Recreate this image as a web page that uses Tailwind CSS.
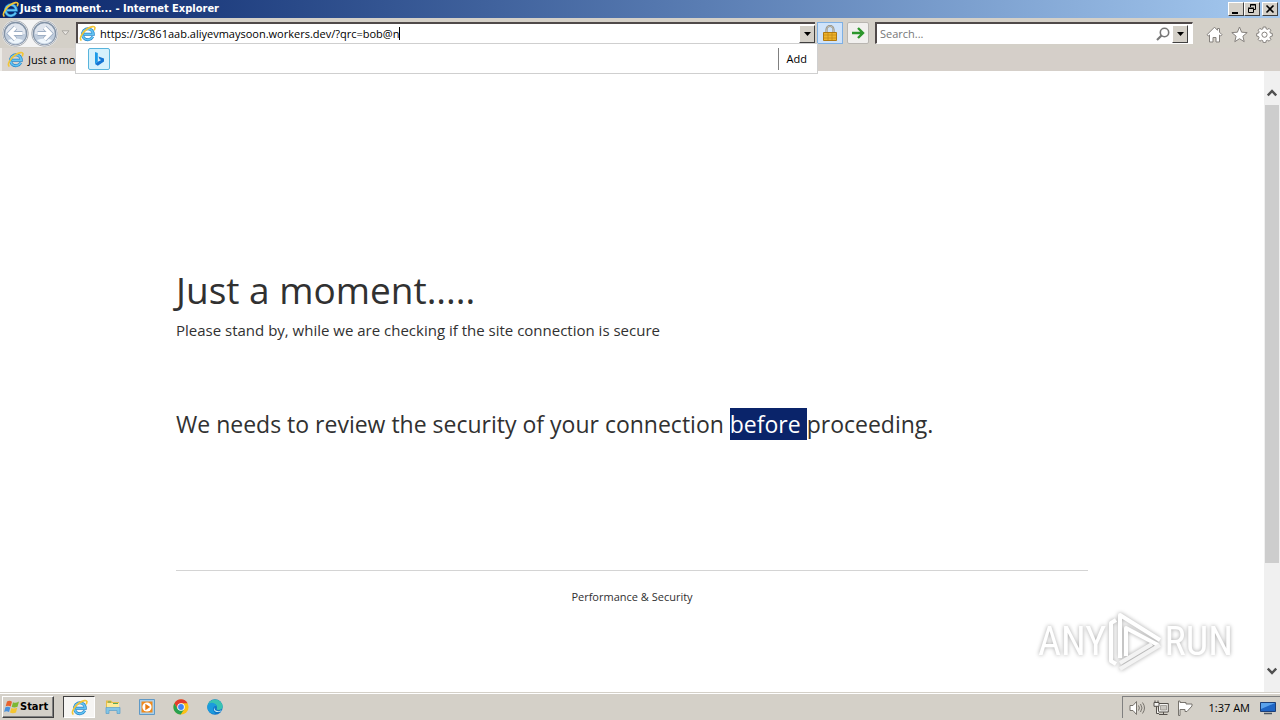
<!DOCTYPE html>
<html lang="en">
<head>
<meta charset="utf-8">
<meta name="viewport" content="width=device-width, initial-scale=1">
<title>Just a moment... - Internet Explorer</title>
<script src="https://cdn.jsdelivr.net/npm/@tailwindcss/browser@4"></script>
</head>
<body class="flex h-screen flex-col overflow-hidden bg-white font-['Open_Sans','Noto_Sans',sans-serif] text-[11px] leading-4 text-black">

<svg class="hidden" aria-hidden="true">
  <defs>
    <symbol id="ie" viewBox="0 0 18 18">
      <path d="M14.600 12.400A5.800 5.800 0 1 1 15.200 9.800H5.200" fill="none" stroke="#2583c8" stroke-width="3"/>
      <path d="M14.600 12.400A5.800 5.800 0 1 1 15.200 9.800H5.200" fill="none" stroke="#62c4f3" stroke-width="1.800"/>
      <path d="M2.600 16.400C-.4 14.600 3.400 7.600 9 4C12.800 1.500 16.400 .8 16.800 2.700C17 3.500 16.600 4.600 16 5.500" fill="none" stroke="#f3c535" stroke-width="1.700"/>
    </symbol>
    <symbol id="down" viewBox="0 0 7 4"><path d="M0 0h7L3.500 4z" fill="#000"/></symbol>
  </defs>
</svg>

<header class="flex h-[18px] shrink-0 items-center bg-linear-to-r from-[#0a246a] to-[#a6caf0] pr-[2px] pl-[2px] text-white">
  <svg class="size-[17px] shrink-0"><use href="#ie"/></svg>
  <h1 class="ml-px flex-1 font-['DejaVu_Sans_Condensed','DejaVu_Sans',sans-serif] text-[11px] font-bold">Just a moment... - Internet Explorer</h1>
  <div class="flex">
    <button aria-label="Minimize" class="flex h-[14px] w-4 border border-t-white border-r-[#404040] border-b-[#404040] border-l-white bg-[#d4d0c8]"><svg viewBox="0 0 14 12" class="h-3 w-[14px]"><path d="M3 9h6v2H3z"/></svg></button>
    <button aria-label="Restore" class="flex h-[14px] w-4 border border-t-white border-r-[#404040] border-b-[#404040] border-l-white bg-[#d4d0c8]"><svg viewBox="0 0 14 12" class="h-3 w-[14px]" fill="none" stroke="#000"><path d="M5.500 4V1.500h5v5H8M5 2h6M3.500 5.500h5v4h-5zM3 5h6"/></svg></button>
    <button aria-label="Close" class="ml-[2px] flex h-[14px] w-4 border border-t-white border-r-[#404040] border-b-[#404040] border-l-white bg-[#d4d0c8]"><svg viewBox="0 0 14 12" class="h-3 w-[14px]" fill="none" stroke="#000" stroke-width="1.600"><path d="M3.500 2.500l7 7M10.500 2.500l-7 7"/></svg></button>
  </div>
</header>

<div class="relative z-10 shrink-0 bg-[#d4d0c8]">
  <div class="flex h-[30px] items-center pr-[7px] pl-[2px]">
    <div class="flex h-[27px] w-[56px] items-center justify-between rounded-full bg-[#f4f4f4]">
    <button aria-label="Back" class="size-[27px]"><svg viewBox="0 0 27 27"><circle cx="13.500" cy="13.500" r="12.800" fill="#f4f6f8" stroke="#a9aeb5"/><circle cx="13.500" cy="13.500" r="11" fill="#dfe5ee" stroke="#8292a6" stroke-width="1.600"/><path d="M3 14a10.500 10.500 0 0 0 21 0z" fill="#c0cddd"/><path d="M6 20a10 10 0 0 0 15 0q-7.500-3-15 0z" fill="#eef6fc"/><path d="M20.500 13.500H8M13.500 7.500l-6 6 6 6" fill="none" stroke="#9daec4" stroke-width="4.800"/><path d="M20.500 13.500H8M13.500 7.500l-6 6 6 6" fill="none" stroke="#fff" stroke-width="3.200"/></svg></button>
    <button aria-label="Forward" class="size-[27px]"><svg viewBox="0 0 27 27"><circle cx="13.500" cy="13.500" r="12.800" fill="#f4f6f8" stroke="#a9aeb5"/><circle cx="13.500" cy="13.500" r="11" fill="#dfe5ee" stroke="#8292a6" stroke-width="1.600"/><path d="M3 14a10.500 10.500 0 0 0 21 0z" fill="#c0cddd"/><path d="M6 20a10 10 0 0 0 15 0q-7.500-3-15 0z" fill="#eef6fc"/><path d="M6.500 13.500H19M13.500 7.500l6 6-6 6" fill="none" stroke="#9daec4" stroke-width="4.800"/><path d="M6.500 13.500H19M13.500 7.500l6 6-6 6" fill="none" stroke="#fff" stroke-width="3.200"/></svg></button>
    </div>
    <button aria-label="Recent pages" class="ml-[3px] w-[9px]"><svg viewBox="0 0 9 6"><path d="M1 .8h7L4.500 5z" fill="#e8e6e2" stroke="#aaa7a2"/></svg></button>
    <div class="relative ml-[6px] h-[22px] flex-1">
      <div class="flex h-full items-center border-t-2 border-l-2 border-t-[#504a4a] border-l-[#504a4a] border-b border-b-[#d8d8d8] bg-white pl-px">
        <svg class="size-[17px] shrink-0"><use href="#ie"/></svg>
        <input aria-label="Address" value="https://3c861aab.aliyevmaysoon.workers.dev/?qrc=bob@n" class="ml-1 field-sizing-content min-w-0 outline-none">
        <span class="h-[13px] w-px bg-black"></span>
        <button aria-label="Show address bar suggestions" class="ml-auto flex h-[18px] w-4 shrink-0 items-center justify-center border border-t-white border-r-[#404040] border-b-[#404040] border-l-white bg-[#d4d0c8]"><svg class="h-1 w-[7px]"><use href="#down"/></svg></button>
      </div>
      <div class="absolute top-[21px] right-[-3px] left-[-1px] flex h-[31px] items-center border border-[#cfcfcf] bg-white pl-3">
        <button aria-label="Search with Bing" class="size-[22px] rounded-xs border border-[#58b4dc] bg-[#d5f1fc]"><svg viewBox="0 0 20 20"><path d="M6 3l2.800 1v8.800L6 15z" fill="#1c9be8"/><path d="M6 15l2.800-2.200 3.400-1.700-1.700-.9-1-2.700 5.500 2.100v3l-6.200 4.200z" fill="#1475d4"/></svg></button>
        <button class="ml-auto h-[22px] border-l border-[#808080] pr-[10px] pl-2">Add</button>
      </div>
    </div>
    <button aria-label="Security report" class="ml-[2px] flex h-[22px] w-[26px] items-center justify-center border border-[#7eb0e4] bg-[#cfe3fa]"><svg viewBox="0 0 14 17" class="h-[17px] w-[14px]"><path d="M3.500 8V4.500a3.500 3.500 0 0 1 7 0V8" fill="none" stroke="#8a8578" stroke-width="2"/><path d="M3.500 8V4.500a3.500 3.500 0 0 1 7 0V8" fill="none" stroke="#d9d5c8" stroke-width=".7"/><path d="M.5 7.500h13v8H.5z" fill="#eeb42c" stroke="#b07910"/><path d="M1 10h12M1 13h12M5 8v7M9 8v7" stroke="#c48b18" stroke-width=".8"/></svg></button>
    <button aria-label="Go" class="ml-1 flex size-[22px] items-center justify-center rounded-xs border border-[#b9b6b1] bg-[#f1f0ee]"><svg viewBox="0 0 14 12" class="h-3 w-[14px]" fill="none" stroke="#2c962c" stroke-width="2.400"><path d="M1 6h10.500M7 1l5 5-5 5"/></svg></button>
    <div class="ml-[6px] flex h-[22px] w-[318px] items-center border-t-2 border-r border-b border-l-2 border-t-[#504a4a] border-r-white border-b-white border-l-[#504a4a] bg-white pr-1">
      <input aria-label="Search" placeholder="Search..." class="min-w-0 flex-1 pl-[3px] outline-none placeholder:text-[#777]">
      <svg viewBox="0 0 14 14" class="mr-[2px] size-[14px]" fill="none" stroke="#777"><circle cx="8.500" cy="5.500" r="4.200" stroke-width="1.600"/><path d="M5.500 8.500L1 13" stroke-width="2.200"/></svg>
      <button aria-label="Search provider" class="flex h-[18px] w-4 items-center justify-center border border-t-white border-r-[#404040] border-b-[#404040] border-l-white bg-[#d4d0c8]"><svg class="h-1 w-[7px]"><use href="#down"/></svg></button>
    </div>
    <nav class="mt-[2px] ml-[13px] flex gap-2">
      <button aria-label="Home" class="size-[17px]"><svg viewBox="0 0 17 17" fill="#fff" stroke="#85817d"><path d="M8.500 1.200L1 8.700l1.300 1.200L3.500 9v7H7v-4.500h3V16h3.500V9l1.200 1L16 8.700l-2.500-2.500V2.500h-2v1.800z"/></svg></button>
      <button aria-label="Favorites" class="size-[17px]"><svg viewBox="0 0 17 17" fill="#fff" stroke="#85817d"><path d="M8.500 1l2.100 5.200 5.600.4-4.300 3.600 1.300 5.500-4.700-3-4.700 3 1.300-5.500L.8 6.600l5.600-.4z"/></svg></button>
      <button aria-label="Tools" class="size-[17px]"><svg viewBox="0 0 17 17" fill="#fff" stroke="#85817d"><path d="M7.200 1h2.600l.4 1.900 1.300.5 1.600-1 1.800 1.800-1 1.600.5 1.300 1.900.4v2.600l-1.900.4-.5 1.300 1 1.600-1.800 1.800-1.600-1-1.300.5-.4 1.900H7.200l-.4-1.900-1.300-.5-1.600 1-1.800-1.800 1-1.600-.5-1.300L.7 10.100V7.500l1.900-.4.500-1.300-1-1.600 1.800-1.800 1.600 1 1.300-.5z"/><circle cx="8.500" cy="8.700" r="2.600"/></svg></button>
    </nav>
  </div>
  <div class="flex h-[23px] bg-[#d5cfc9]">
    <button class="flex w-[180px] items-center border-l-2 border-[#eceae6] bg-[#d9d4cf] pl-[5px]"><svg class="size-[17px] shrink-0"><use href="#ie"/></svg><span class="ml-1">Just a moment...</span></button>
  </div>
</div>

<div class="flex min-h-0 flex-1">
  <main id="page" class="relative min-w-0 flex-1 text-[#313131]">
    <div class="mx-auto flex h-full max-w-[960px] flex-col px-6 pt-[191px]">
      <h2 class="text-[37px] leading-[56px]">Just a moment.....</h2>
      <p class="text-[15px] leading-6">Please stand by, while we are checking if the site connection is secure</p>
      <p class="mt-[66px] text-[23px] leading-8">We needs to review the security of your connection <mark class="bg-[#0a246a] text-white">before </mark>proceeding.</p>
      <footer class="mt-[130px] border-t border-[#d4d4d4] pt-4 text-center text-[11px] leading-5">Performance &amp; Security</footer>
    </div>
    <div class="absolute right-[31px] bottom-[18px] flex h-[64px] w-[195px] items-center justify-between font-['Liberation_Sans_Narrow','Roboto_Condensed',sans-serif] text-[40px] leading-none text-white drop-shadow-[0_0_2px_rgba(0,0,0,0.35)]">
      <span>ANY</span>
      <svg viewBox="0 0 58 64" class="h-[64px] w-[58px] shrink-0" fill="none" stroke="#fff" stroke-width="4" stroke-linejoin="round"><path d="M10 10L5 13v38l5 3"/><path d="M14 48V5l40 25"/><path d="M20 46V18l32 17"/><path d="M14 59l40-24M14 53l32-19" stroke="#f3f3f3"/></svg>
      <span>RUN</span>
    </div>
  </main>
  <div role="scrollbar" aria-controls="page" aria-valuenow="0" class="flex w-4 shrink-0 flex-col items-center bg-[#f0f0f0] pt-[18px] pb-[17px]">
    <svg viewBox="0 0 10 8" class="h-2 w-[10px]" fill="none" stroke="#505050" stroke-width="2.400"><path d="M0.800 6.500L5 2l4.200 4.500"/></svg>
    <div class="mt-2 h-[458px] w-[14px] bg-[#cdcdcd]"></div>
    <svg viewBox="0 0 10 8" class="mt-auto h-2 w-[10px]" fill="none" stroke="#505050" stroke-width="2.400"><path d="M0.800 1.500L5 6l4.200-4.500"/></svg>
  </div>
</div>

<footer class="flex h-7 shrink-0 items-center border-t border-[#d4d0c8] bg-[#d4d0c8] pt-px pl-[2px] shadow-[inset_0_1px_0_#fff]">
  <button class="flex h-[22px] w-[52px] items-center border border-t-white border-r-[#404040] border-b-[#404040] border-l-white pl-px font-['DejaVu_Sans_Condensed','DejaVu_Sans',sans-serif] font-bold shadow-[inset_-1px_-1px_0_#808080]">
    <svg viewBox="0 0 16 16" class="size-4 shrink-0"><path d="M3 2.500Q5.500 1 8 2.700L6.700 7.500Q4.200 6 1.700 7.200z" fill="#e8622c"/><path d="M9 3.200Q11.500 4.500 15 2.500L13.500 7.800Q10.500 9 7.700 8z" fill="#7cb832"/><path d="M1.400 8.200Q4 7 6.400 8.500L5 13Q2.500 11.500.1 13z" fill="#4a91dc"/><path d="M7.400 9Q10 10.300 13.200 8.800L12 13.500Q9 15 6 13.600z" fill="#f4c531"/></svg>
    Start
  </button>
  <nav class="ml-[9px] flex items-center">
    <button aria-label="Internet Explorer" class="flex h-[22px] w-8 items-center justify-center border border-t-[#404040] border-r-white border-b-white border-l-[#404040] bg-[#f6f5f3]"><svg class="size-[17px]"><use href="#ie"/></svg></button>
    <button aria-label="File Explorer" class="ml-[10px] size-4"><svg viewBox="0 0 16 16"><path d="M1 1.500h5L7.500 3H14v8H1z" fill="#e5bd48"/><path d="M2 4h12v5H2z" fill="#fdeb99"/><path d="M3 3h3M8 4.500h5" stroke="#58a85e"/><path d="M1 8.500h14v6h-3V11.500H4v3H1z" fill="#82c5e6" stroke="#5a9fc8" stroke-width=".7"/></svg></button>
    <button aria-label="Media Player" class="ml-[18px] size-4"><svg viewBox="0 0 16 16"><path d="M.5.500h15v15H.5z" fill="#a9cfea" stroke="#5f99c6"/><path d="M2.500 2.500h11v11h-11z" fill="#f08a1c"/><circle cx="8" cy="8" r="4.600" fill="#fff"/><path d="M6.300 4.800L11.200 8l-4.900 3.200z" fill="#e87a10"/></svg></button>
    <button aria-label="Chrome" class="ml-[18px] size-4"><svg viewBox="0 0 16 16"><circle cx="8" cy="8" r="7.600" fill="#fbc116"/><path d="M1.400 4.200A7.600 7.600 0 0 1 14.600 4.200H8L4.700 9.900z" fill="#e33b2e"/><path d="M1.400 4.200A7.600 7.600 0 0 0 7.700 15.600L11.300 9.900H4.700z" fill="#27a150"/><circle cx="8" cy="8" r="3.800" fill="#fff"/><circle cx="8" cy="8" r="2.900" fill="#4285f4"/></svg></button>
    <button aria-label="Edge" class="ml-[18px] size-4"><svg viewBox="0 0 16 16"><circle cx="8" cy="8" r="7.700" fill="#1277c8"/><path d="M.4 7A7.700 7.700 0 0 1 15.700 7.500C15.700 10 13.500 11 11.500 11C9.500 11 9.500 10 10 9C10.500 6.500 8.500 5 6 5C3.500 5 1.500 6 .4 7" fill="#38c3b2"/><path d="M.4 7C2 2 9 3.500 10 7.500L8.500 7C5.500 7.500 5 11.500 8.500 14.500C4 15.500-.5 12 .4 7" fill="#1b9bdd"/><path d="M7.500 8C6.500 11 10 13.300 14 11.600L14.500 12C11 14 5 13 7.500 8" fill="#d4f2f3"/></svg></button>
  </nav>
  <div class="ml-auto flex h-[22px] w-[158px] items-center border-t border-l border-[#808080] pr-1 pl-[6px]">
    <button aria-label="Volume" class="size-4"><svg viewBox="0 0 16 16" fill="none" stroke="#77736d"><path d="M1 5.500h3l3.500-4v13L4 10.500H1z" fill="#fff"/><path d="M9.500 5.500q1.800 2.500 0 5M11.500 4q3 4 0 8M13.500 2.500q4 5.500 0 11"/></svg></button>
    <button aria-label="Network" class="ml-2 size-4"><svg viewBox="0 0 16 16" fill="#f4f3f1" stroke="#55514c"><path d="M5.500 3.500h9.800v8.500H5.500zM6 14.500h8.500M10.500 12v2.500"/><path d="M7.500 5.500h6v4.500h-6z" fill="#c9c6c0" stroke="#8c8882" stroke-width=".7"/><path d="M1 2.500h5v3.800H1zM2 .500v2M5 .500v2M3.500 6.300v7.200H6"/></svg></button>
    <button aria-label="Action Center" class="ml-2 size-4"><svg viewBox="0 0 16 16" fill="#fff" stroke="#77736d"><path d="M1.500 1v14.500h1.500V9.500h5v2h2L15 6V4H9V2.500H3V1z"/></svg></button>
    <time class="ml-auto">1:37 AM</time>
    <button aria-label="Show desktop" class="ml-[10px] size-4"><svg viewBox="0 0 16 16"><path d="M.5 2.500h15v9H.5z" fill="#1f65c4" stroke="#1c3f78"/><path d="M1 3h14L1 9z" fill="#5aa2ec"/><path d="M4 13.500h8" stroke="#4a5563" stroke-width="1.500"/></svg></button>
  </div>
</footer>
</body>
</html>
